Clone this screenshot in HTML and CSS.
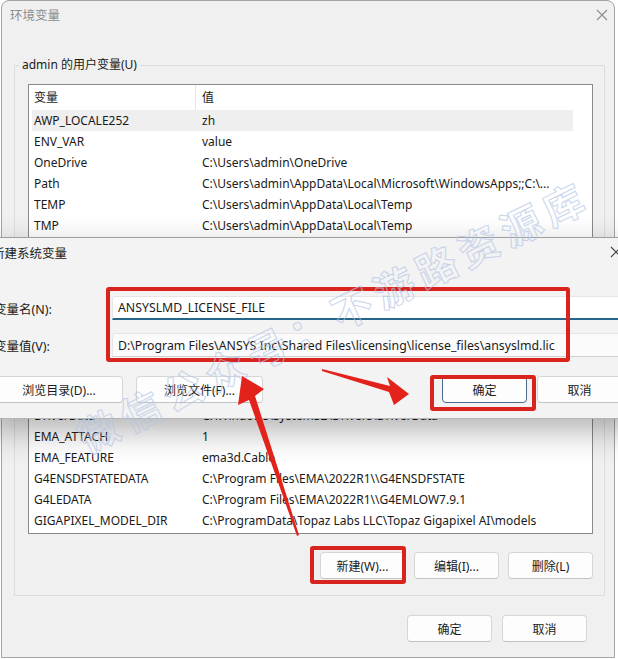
FILE: index.html
```html
<!DOCTYPE html>
<html lang="zh-CN">

<head>
    <meta charset="UTF-8">
    <title>环境变量</title>
    <link rel="stylesheet" href="styles.css">
</head>

<body>
    <div class="window">
        <div class="titlebar">
            <span class="title">环境变量</span>
            <svg class="close" width="12" height="12" viewBox="0 0 12 12">
                <path d="M1 1 L11 11 M11 1 L1 11" stroke="#8c8c8c" stroke-width="1.1" fill="none" />
            </svg>
        </div>

        <fieldset class="group user-group">
            <legend>admin 的用户变量(U)</legend>
            <div class="var-list user-list">
                <div class="list-head">
                    <div class="col-name">变量</div>
                    <div class="col-value">值</div>
                </div>
                <div class="list-body">
                    <div class="row selected"><span class="name">AWP_LOCALE252</span><span class="value">zh</span></div>
                    <div class="row"><span class="name">ENV_VAR</span><span class="value">value</span></div>
                    <div class="row"><span class="name">OneDrive</span><span class="value">C:\Users\admin\OneDrive</span></div>
                    <div class="row"><span class="name">Path</span><span class="value">C:\Users\admin\AppData\Local\Microsoft\WindowsApps;;C:\...</span></div>
                    <div class="row"><span class="name">TEMP</span><span class="value">C:\Users\admin\AppData\Local\Temp</span></div>
                    <div class="row"><span class="name">TMP</span><span class="value">C:\Users\admin\AppData\Local\Temp</span></div>
                </div>
            </div>
            <div class="group-buttons">
                <button class="btn">新建(N)...</button>
                <button class="btn">编辑(E)...</button>
                <button class="btn">删除(D)</button>
            </div>
        </fieldset>

        <fieldset class="group sys-group">
            <legend>系统变量(S)</legend>
            <div class="var-list sys-list">
                <div class="list-head">
                    <div class="col-name">变量</div>
                    <div class="col-value">值</div>
                </div>
                <div class="list-body scrolled">
                    <div class="row"><span class="name">ComSpec</span><span class="value">C:\Windows\system32\cmd.exe</span></div>
                    <div class="row"><span class="name">DriverData</span><span class="value">C:\Windows\System32\Drivers\DriverData</span></div>
                    <div class="row"><span class="name">EMA_ATTACH</span><span class="value">1</span></div>
                    <div class="row"><span class="name">EMA_FEATURE</span><span class="value">ema3d.Cable</span></div>
                    <div class="row"><span class="name">G4ENSDFSTATEDATA</span><span class="value">C:\Program Files\EMA\2022R1\\G4ENSDFSTATE</span></div>
                    <div class="row"><span class="name">G4LEDATA</span><span class="value">C:\Program Files\EMA\2022R1\\G4EMLOW7.9.1</span></div>
                    <div class="row"><span class="name">GIGAPIXEL_MODEL_DIR</span><span class="value">C:\ProgramData\Topaz Labs LLC\Topaz Gigapixel AI\models</span></div>
                </div>
            </div>
            <div class="group-buttons">
                <button class="btn">新建(W)...</button>
                <button class="btn">编辑(I)...</button>
                <button class="btn">删除(L)</button>
            </div>
        </fieldset>

        <div class="dialog-buttons">
            <button class="btn">确定</button>
            <button class="btn">取消</button>
        </div>
    </div>

    <!-- child dialog on top of the main window -->
    <div class="subdialog">
        <div class="sub-titlebar">
            <span>新建系统变量</span>
            <svg class="sub-close" width="12" height="12" viewBox="0 0 12 12">
                <path d="M1 1 L11 11 M11 1 L1 11" stroke="#444" stroke-width="1.1" fill="none" />
            </svg>
        </div>
        <div class="form-row first">
            <label for="var-name">变量名(N):</label>
            <input id="var-name" class="field focused" type="text" value="ANSYSLMD_LICENSE_FILE">
        </div>
        <div class="form-row">
            <label for="var-value">变量值(V):</label>
            <input id="var-value" class="field" type="text" value="D:\Program Files\ANSYS Inc\Shared Files\licensing\license_files\ansyslmd.lic">
        </div>
        <div class="sub-buttons">
            <button class="btn browse-dir">浏览目录(D)...</button>
            <button class="btn browse-file">浏览文件(F)...</button>
            <button class="btn default ok">确定</button>
            <button class="btn">取消</button>
        </div>
    </div>

    <!-- annotations -->
    <div class="mark mark-fields"></div>
    <div class="mark mark-ok"></div>
    <div class="mark mark-new"></div>

    <div class="watermark">微信公众号：不游路资源库</div>

    <svg class="arrows" width="618" height="659" viewBox="0 0 618 659">
        <polygon points="322,369 390,386 387,377 409,394 394,405 389,392 322,371" fill="#e3221b" />
        <polygon points="242,376 264,389 255,396 299,535 297,536 249,400 238,405" fill="#e3221b" />
    </svg>
</body>

</html>
```

FILE: styles.css
```css
* {
    margin: 0;
    padding: 0;
    box-sizing: border-box;
}

body {
    font-family: "Noto Sans", "Noto Sans CJK SC", sans-serif;
    font-size: 12px;
    color: #1a1a1a;
    background-color: #ffffff;
    width: 618px;
    height: 659px;
    overflow: hidden;
    position: relative;
}

button,
input {
    font-family: inherit;
    color: inherit;
}

/* main window */
.window {
    width: 614px;
    height: 658px;
    margin-left: 1px;
    background-color: #f0f0f0;
    border: 1px solid #a5a5a5;
    border-radius: 8px 8px 0 0;
}

.titlebar {
    height: 27px;
    display: flex;
    align-items: center;
    padding-left: 8px;
}

.title {
    color: #8d8d8d;
    font-size: 12.5px;
}

.close {
    margin-left: auto;
    margin-right: 6px;
}

.group {
    border: 1px solid #dcdcdc;
    min-width: 0;
    margin: 29px 9px 0 12px;
    padding: 11px 11px 12px 13px;
}

.group legend {
    margin-left: -9px;
    padding: 0 3px;
    line-height: 16px;
    font-size: 12px;
}

.sys-group {
    margin-top: 8px;
    padding-top: 10px;
    padding-bottom: 16px;
}

.var-list {
    background-color: #ffffff;
    border: 1px solid #8a8a8a;
    display: flex;
    flex-direction: column;
    overflow: hidden;
}

.user-list {
    height: 180px;
}

.sys-list {
    height: 184px;
}

.list-head {
    display: flex;
    height: 25px;
    line-height: 25px;
    flex-shrink: 0;
}

.list-head .col-name {
    width: 167px;
    padding-left: 5px;
    border-right: 1px solid #e5e5e5;
}

.list-head .col-value {
    padding-left: 6px;
}

.list-body {
    padding: 0 19px 0 3px;
}

.list-body.scrolled {
    flex: 1;
    display: flex;
    flex-direction: column;
    justify-content: flex-end;
    overflow: hidden;
    padding-bottom: 2px;
}

.row {
    display: flex;
    height: 21px;
    line-height: 21px;
    flex-shrink: 0;
    white-space: nowrap;
}

.row.selected {
    background-color: #efefef;
}

.row .name {
    width: 163px;
    padding-left: 2px;
    flex-shrink: 0;
}

.row .value {
    padding-left: 7px;
    overflow: hidden;
}

.group-buttons {
    display: flex;
    justify-content: flex-end;
    gap: 9px;
    margin-top: 12px;
}

.sys-group .group-buttons {
    margin-top: 18px;
}

.btn {
    width: 85px;
    height: 27px;
    background-color: #fdfdfd;
    border: 1px solid #d6d6d6;
    border-bottom-color: #c2c2c2;
    border-radius: 4px;
    font-size: 12px;
}

.dialog-buttons {
    display: flex;
    justify-content: flex-end;
    gap: 10px;
    margin-top: 19px;
    padding-right: 27px;
}

/* new system variable dialog */
.subdialog {
    position: absolute;
    top: 237px;
    left: -12px;
    width: 652px;
    height: 182px;
    background-color: #f3f3f3;
    border-top: 1px solid #9e9e9e;
    border-bottom: 1px solid #b5b5b5;
    box-shadow: 0 12px 30px rgba(0, 0, 0, 0.3);
    padding: 6px 18px 0 6px;
}

.sub-titlebar {
    display: flex;
    align-items: center;
    height: 16px;
    margin-left: -2px;
    font-size: 12.5px;
}

.sub-close {
    margin-left: auto;
    margin-right: 0;
}

.form-row {
    display: flex;
    align-items: center;
    margin-top: 13px;
}

.form-row.first {
    margin-top: 36px;
}

.form-row label {
    width: 118px;
    flex-shrink: 0;
    font-size: 12.5px;
}

.field {
    flex: 1;
    height: 24px;
    border: 1px solid #e6e6e6;
    border-bottom-color: #cfcfcf;
    border-radius: 3px 3px 0 0;
    background-color: #fbfbfb;
    padding-left: 5px;
    font-size: 12.3px;
    outline: none;
    margin-right: -18px;
}

.field.focused {
    background-color: #ffffff;
    border-bottom: 2px solid #24678a;
}

.sub-buttons {
    display: flex;
    margin-top: 19px;
    margin-left: 1px;
}

.sub-buttons .browse-dir {
    width: 128px;
}

.sub-buttons .browse-file {
    width: 127px;
    margin-left: 13px;
}

.sub-buttons .ok {
    margin-left: auto;
    margin-right: 10px;
}

.btn.default {
    border-color: #4d6a86;
}

/* red annotation boxes */
.mark {
    position: absolute;
    border: 4px solid #d9231d;
    border-radius: 3px;
}

.mark-fields {
    left: 106px;
    top: 287px;
    width: 464px;
    height: 75px;
}

.mark-ok {
    left: 430px;
    top: 375px;
    width: 106px;
    height: 36px;
}

.mark-new {
    left: 310px;
    top: 546px;
    width: 96px;
    height: 38px;
}

.watermark {
    position: absolute;
    left: 40px;
    top: 292px;
    width: 588px;
    line-height: 50px;
    text-align: center;
    font-size: 40px;
    font-weight: 700;
    letter-spacing: 7px;
    color: transparent;
    -webkit-text-stroke: 1px #b3c5e6;
    transform: rotate(-26deg);
    opacity: 0.7;
}

.arrows {
    position: absolute;
    top: 0;
    left: 0;
    pointer-events: none;
}
```
